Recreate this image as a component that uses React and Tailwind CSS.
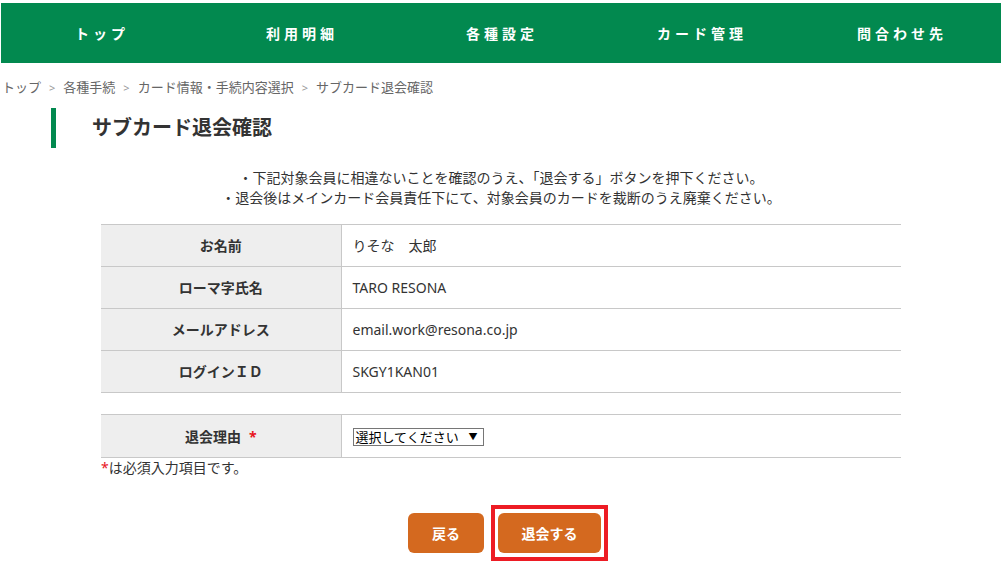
import React from 'react';

const font = { fontFamily: '"Noto Sans", "Noto Sans CJK JP", sans-serif' };

const navItems = ['トップ', '利用明細', '各種設定', 'カード管理', '問合わせ先'];
const crumbs = ['トップ', '各種手続', 'カード情報・手続内容選択', 'サブカード退会確認'];

const rows = [
  { label: 'お名前', value: 'りそな　太郎' },
  { label: 'ローマ字氏名', value: 'TARO RESONA' },
  { label: 'メールアドレス', value: 'email.work@resona.co.jp' },
  { label: 'ログインＩＤ', value: 'SKGY1KAN01' },
];

const App = () => {
  return (
    <div className="w-[1005px] h-[582px] bg-white text-[#333] overflow-hidden" style={font}>
      <div className="w-[1000px] ml-[1px] pt-[3px]">
        {/* Header */}
        <nav className="grid grid-cols-5 h-[60px] bg-[#02894f]">
          {navItems.map((item) => (
            <div
              key={item}
              className="flex items-center justify-center text-white text-[14px] font-bold tracking-[4px] pl-[2px]"
            >
              {item}
            </div>
          ))}
        </nav>

        {/* Breadcrumb */}
        <div className="flex items-center h-[26px] mt-[12px] ml-[1px] text-[13px] text-[#666]">
          {crumbs.map((c, i) => (
            <React.Fragment key={c}>
              {i > 0 && <span className="mx-[8px] text-[#999] text-[11px]">&gt;</span>}
              <span>{c}</span>
            </React.Fragment>
          ))}
        </div>

        {/* Title */}
        <div className="flex items-center h-[40px] mt-[7px] ml-[50px] border-l-[5px] border-[#02894f] pl-[36px]">
          <h1 className="text-[20px] font-bold text-[#333]">サブカード退会確認</h1>
        </div>

        {/* Notes */}
        <div className="mt-[20px] text-center text-[14px] leading-[20px] text-[#333]">
          <p>・下記対象会員に相違ないことを確認のうえ、「退会する」ボタンを押下ください。</p>
          <p>・退会後はメインカード会員責任下にて、対象会員のカードを裁断のうえ廃棄ください。</p>
        </div>

        {/* Member table */}
        <div className="w-[800px] mx-auto mt-[16px]">
          <table className="w-full border-collapse text-[14px]">
            <tbody>
              {rows.map((r) => (
                <tr key={r.label} className="h-[42px] border-y border-[#c8c8c8]">
                  <th className="w-[240px] bg-[#eee] font-bold text-center border-r border-[#c8c8c8]">{r.label}</th>
                  <td className="pl-[11px] text-[#333]">{r.value}</td>
                </tr>
              ))}
            </tbody>
          </table>

          <table className="w-full border-collapse text-[14px] mt-[21px]">
            <tbody>
              <tr className="h-[43px] border-y border-[#c8c8c8]">
                <th className="w-[240px] bg-[#eee] font-bold text-center border-r border-[#c8c8c8]">
                  退会理由<span className="text-[#e8141e] ml-[8px]">*</span>
                </th>
                <td className="pl-[11px]">
                  <div className="inline-flex items-center h-[18px] w-[131px] border border-[#767676] pl-[2px] pr-[5px] text-[13px] leading-[16px] text-black justify-between">
                    <span>選択してください</span>
                    <span className="text-[9px]">▼</span>
                  </div>
                </td>
              </tr>
            </tbody>
          </table>
          <p className="text-[14px] mt-[1px] leading-[18px]">
            <span className="text-[#e8141e]">*</span>は必須入力項目です。
          </p>
        </div>

        {/* Buttons */}
        <div className="flex items-center justify-center mt-[28px] pl-[14px]">
          <button className="w-[76px] h-[40px] rounded-[6px] bg-[#d4691f] text-white text-[14px] font-bold">
            戻る
          </button>
          <div className="ml-[7px] w-[117px] h-[56px] border-[4px] border-[#ed1c24] flex items-center justify-center">
            <button className="w-[103px] h-[40px] rounded-[6px] bg-[#d4691f] text-white text-[14px] font-bold">
              退会する
            </button>
          </div>
        </div>
      </div>
    </div>
  );
};

export default App;
